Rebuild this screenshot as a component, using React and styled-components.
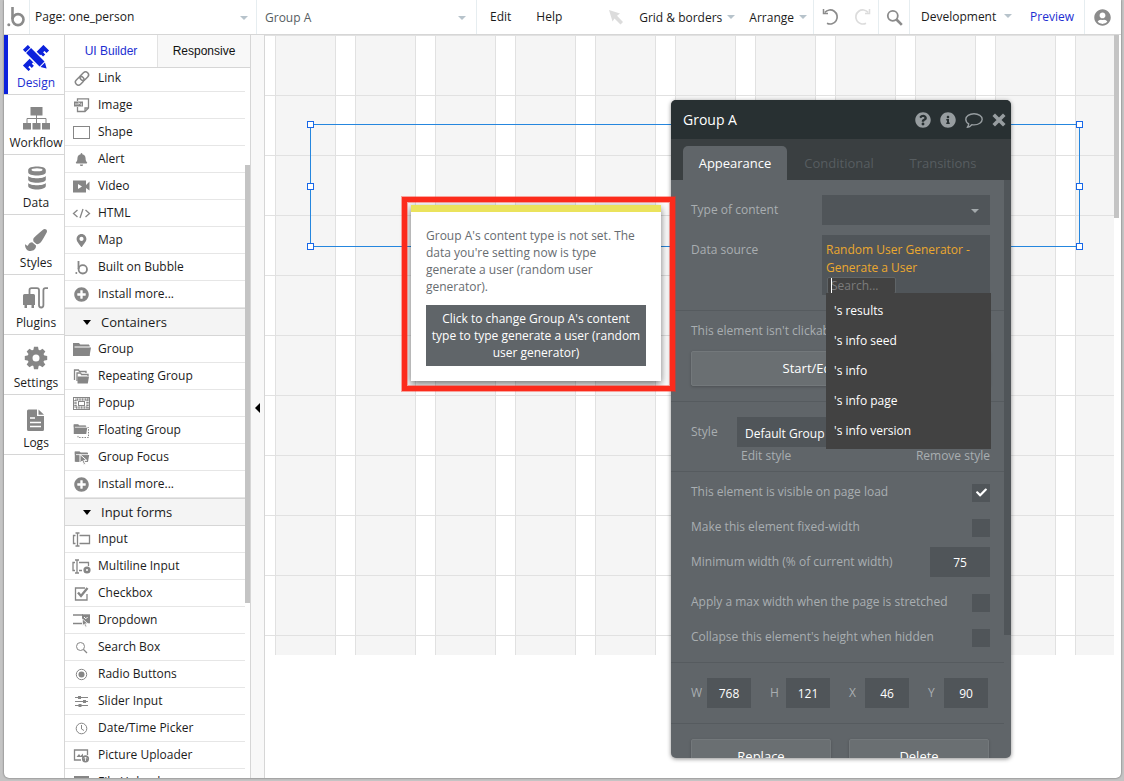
import React from 'react';
import styled, { createGlobalStyle, css } from 'styled-components';
import {
  FaCheck,
  FaInfoCircle,
  FaPaintBrush,
  FaPlusCircle,
  FaQuestionCircle,
  FaUserCircle,
  FaBell,
  FaMapMarkerAlt,
} from 'react-icons/fa';

const GlobalStyle = createGlobalStyle`
  * {
    box-sizing: border-box;
  }
  body {
    margin: 0;
    background: #c4c4c4;
    font-family: 'Open Sans', 'Noto Sans', sans-serif;
    font-size: 12px;
    color: #1b1b1b;
  }
  button,
  input,
  select {
    font: inherit;
    color: inherit;
    margin: 0;
    border: none;
    border-radius: 0;
    background: none;
    outline: none;
  }
  button {
    padding: 0;
    cursor: pointer;
  }
  a {
    color: inherit;
    text-decoration: none;
  }
`;

const Screen = styled.div`
  height: 100vh;
  padding: 0 3px 3px 4px;
`;

const Window = styled.div`
  display: flex;
  flex-direction: column;
  height: 100%;
  background: #fff;
  border-radius: 0 0 5px 5px;
  box-shadow: 0 0 2px rgba(0, 0, 0, 0.6);
  overflow: hidden;
`;

/* ---------- top bar ---------- */

const TopBar = styled.header`
  display: flex;
  flex: none;
  height: 35px;
  border-bottom: 1px solid #d6d6d6;
`;

const Cell = styled.div`
  display: flex;
  flex: none;
  align-items: center;
  justify-content: center;
  width: ${(p) => p.$width}px;
  border-right: 1px solid ${(p) => (p.$last ? 'transparent' : '#e6edf0')};
`;

const Picker = styled.label`
  position: relative;
  display: flex;
  flex: 0 1 ${(p) => p.$width}px;
  border-right: 1px solid #e6edf0;

  select {
    flex: 1;
    min-width: 0;
    padding: 0 20px ${(p) => p.$lift || 0}px ${(p) => p.$indent}px;
    appearance: none;
    color: ${(p) => p.$color};
  }
`;

const caret = css`
  content: '';
  border: 5px solid transparent;
  border-top-color: #b7c3cb;
  border-bottom: none;
`;

const PickerCaret = styled.span`
  position: absolute;
  right: ${(p) => p.$right || 8}px;
  top: 16px;
  pointer-events: none;

  &::after {
    display: block;
    ${caret}
    border-width: 4px;
    border-bottom: none;
  }
`;

const Menus = styled.nav`
  display: flex;
  flex: 1;
  align-items: center;
  padding: 0 0 2px 13px;
  gap: 25px;
`;

const Tools = styled.div`
  display: flex;
  align-items: center;
  gap: 14px;
  padding-right: 6px;
  border-right: 1px solid #e6edf0;
`;

const MenuButton = styled.button`
  display: flex;
  align-items: center;
  gap: ${(p) => p.$gap || 5}px;
  white-space: nowrap;

  &::after {
    ${(p) => p.$caret && caret}
    border-width: 4px;
    border-bottom: none;
  }
`;

const History = styled.div`
  display: flex;
  align-items: center;
  justify-content: space-between;
  width: 65px;
  padding: 0 7px 0 8px;
  border-right: 1px solid #e6edf0;
`;

const Deploy = styled.div`
  display: flex;
  align-items: center;
  justify-content: space-between;
  width: 175px;
  padding: 0 10px 2px 11px;
  border-right: 1px solid #e6edf0;
`;

const PreviewLink = styled.a`
  color: #1d2fd2;
`;

const IconButton = styled.button`
  display: flex;
  color: ${(p) => p.$color || '#8b8b8b'};
`;

/* ---------- left navigation ---------- */

const Workspace = styled.div`
  display: flex;
  flex: 1;
  min-height: 0;
`;

const Rail = styled.nav`
  flex: none;
  width: 61px;
  border-right: 1px solid #d6d6d6;
`;

const RailItem = styled.a`
  display: flex;
  flex-direction: column;
  align-items: center;
  gap: 3px;
  height: 60px;
  padding: 10px 0 0 4px;
  border-bottom: 1px solid #d6d6d6;
  box-shadow: ${(p) => (p.$active ? 'inset 4px 0 0 #0c22dc' : 'none')};
  color: ${(p) => (p.$active ? '#1d2fd2' : '#1b1b1b')};
  line-height: 18px;

  svg {
    flex: none;
    color: ${(p) => (p.$active ? '#0c22dc' : '#868686')};
  }
`;

/* ---------- element palette ---------- */

const Palette = styled.aside`
  display: flex;
  flex: none;
  flex-direction: column;
  width: 186px;
  border-right: 1px solid #d6d6d6;
`;

const PaletteTabs = styled.div`
  display: flex;
  flex: none;
  height: 33px;
  border-bottom: 1px solid #d6d6d6;
`;

const PaletteTab = styled.button`
  flex: 1;
  font-family: 'Liberation Sans', sans-serif;
  color: ${(p) => (p.$active ? '#1d2fd2' : '#111')};
  background: ${(p) => (p.$active ? '#fff' : '#f8f8f8')};

  & + & {
    border-left: 1px solid #e2e2e2;
  }
`;

const PaletteBody = styled.div`
  display: flex;
  flex: 1;
  min-height: 0;
  overflow: hidden;
`;

const PaletteList = styled.div`
  flex: 1;
  margin-top: -3px;
`;

const PaletteItem = styled.button`
  display: flex;
  align-items: center;
  gap: 6px;
  width: 100%;
  height: 27px;
  padding-left: 7px;
  border-bottom: 1px solid #e6e6e6;
  text-align: left;

  svg {
    flex: none;
    color: #868686;
  }

  span {
    padding-bottom: 2px;
  }
`;

const SectionHead = styled.button`
  display: flex;
  align-items: center;
  gap: 10px;
  width: 100%;
  height: 28px;
  padding-left: 18px;
  border: solid #d6d6d6;
  border-width: 1px 0;
  background: #f4f4f4;
  font-size: 13px;

  &::before {
    content: '';
    border: 4px solid transparent;
    border-top: 5px solid #000;
    border-bottom: none;
  }
`;

const PaletteTrack = styled.div`
  flex: none;
  width: 5px;
  padding-top: 97px;
`;

const Thumb = styled.div`
  width: ${(p) => p.$width}px;
  height: ${(p) => p.$height}px;
  background: ${(p) => p.$color || '#c4c4c4'};
`;

const Gutter = styled.div`
  display: flex;
  flex: none;
  align-items: center;
  justify-content: center;
  width: 14px;
  padding-top: 3px;
  border-right: 1px solid #d6d6d6;
  background: #f8f8f8;
`;

const Collapse = styled.button`
  border: 5px solid transparent;
  border-right: 5px solid #000;
  border-left: none;
`;

/* ---------- canvas ---------- */

const Canvas = styled.main`
  position: relative;
  display: flex;
  flex: 1;
  min-width: 0;
`;

const Grid = styled.div`
  flex: 1;
  height: 620px;
  background:
    linear-gradient(#e1e1e1 1px, transparent 1px) 0 0 / 100% 60px,
    linear-gradient(90deg, #e1e1e1 1px, #f5f5f5 1px 60px, #e1e1e1 60px 61px, #fff 61px) 10px 0 /
      80px 100%;
`;

const CanvasTrack = styled.div`
  flex: none;
  width: 7px;
`;

const Selection = styled.div`
  position: absolute;
  top: 89px;
  left: 45px;
  width: 770px;
  height: 123px;
  border: 1px solid #2586de;
`;

const Handle = styled.span`
  position: absolute;
  top: ${(p) => p.$y}px;
  ${(p) => p.$side}: -4px;
  width: 7px;
  height: 7px;
  border: 1px solid #1767e8;
  background: #fff;
`;

const Callout = styled.section`
  position: absolute;
  top: 170px;
  left: 146px;
  width: 250px;
  padding: 15px;
  border-top: 7px solid #ebe35c;
  background: #fff;
  box-shadow: 0 3px 8px rgba(0, 0, 0, 0.55);
  color: #676c70;
  line-height: 17px;

  p {
    margin: 0 0 10px;
  }

  button {
    width: 100%;
    padding: 5px;
    background: #606569;
    color: #fff;
  }
`;

const Highlight = styled.div`
  position: absolute;
  top: 162px;
  left: 137px;
  width: 273px;
  height: 194px;
  border: 5px solid #fc2b1c;
  box-shadow:
    0 0 0 1px rgba(252, 43, 28, 0.4),
    inset 0 0 0 1px rgba(252, 43, 28, 0.4);
  pointer-events: none;
`;

/* ---------- property editor ---------- */

const Editor = styled.section`
  position: absolute;
  top: 65px;
  bottom: 20px;
  left: 406px;
  display: flex;
  flex-direction: column;
  width: 340px;
  border-radius: 5px;
  background: #606569;
  box-shadow: 0 1px 4px rgba(0, 0, 0, 0.45);
  color: #a9aeb1;
  overflow: hidden;
`;

const EditorHead = styled.header`
  display: flex;
  flex: none;
  align-items: center;
  gap: 9px;
  height: 39px;
  padding: 1px 5px 0 12px;
  background: #283032;

  h2 {
    flex: 1;
    margin: 0;
    padding-bottom: 1px;
    font-size: 14px;
    font-weight: 400;
    color: #fff;
  }
`;

const EditorTabs = styled.div`
  display: flex;
  flex: none;
  align-items: flex-end;
  height: 41px;
  padding-left: 12px;
  background: #3a3f41;
`;

const EditorTab = styled.button`
  width: 104px;
  height: 34px;
  border-radius: 5px 5px 0 0;
  font-size: 13px;
  background: ${(p) => (p.$active ? '#606569' : 'none')};
  color: ${(p) => (p.$active ? '#fff' : '#575d60')};
`;

const EditorBody = styled.div`
  display: flex;
  flex: 1;
  min-height: 0;
  overflow: hidden;
`;

const Fields = styled.form`
  flex: 1;
`;

const Section = styled.div`
  display: flex;
  flex-direction: column;
  gap: ${(p) => p.$gap || 0}px;
  padding: ${(p) => p.$top || 15}px 14px ${(p) => p.$bottom || 15}px 20px;
  border-bottom: 1px solid #565b5f;
`;

const Field = styled.div`
  display: flex;
  justify-content: space-between;
  line-height: 30px;
`;

const Dropdown = styled.span`
  position: relative;
  display: flex;
  width: ${(p) => p.$width}px;
  height: 30px;

  select {
    flex: 1;
    padding: 2px 8px 0;
    appearance: none;
    background: #505559;
    color: #fff;
  }
`;

const DropdownCaret = styled(PickerCaret)`
  right: 11px;
  top: 14px;
  line-height: 0;

  &::after {
    border-top-color: #a3a9ac;
  }
`;

const Expression = styled.div`
  position: relative;
  width: 168px;
  height: 60px;
  padding: 6px 4px 0;
  background: #505559;
  line-height: 18px;
  color: #eba82f;
`;

const Search = styled.input`
  position: absolute;
  top: 42px;
  left: 5px;
  width: 69px;
  height: 17px;
  padding: 0 3px;
  border: 1px solid #5f6467;
  border-radius: 2px;
  background: #424242;
  color: #fff;

  &::placeholder {
    color: #7c7c7c;
    opacity: 1;
  }
`;

const Cursor = styled.span`
  position: absolute;
  top: 43px;
  left: 9px;
  width: 1px;
  height: 15px;
  background: #fff;
`;

const Options = styled.ul`
  position: absolute;
  z-index: 2;
  top: 58px;
  left: 4px;
  width: 165px;
  margin: 0;
  padding: 3px 0;
  list-style: none;
  background: #424242;

  button {
    display: block;
    width: 100%;
    height: 30px;
    padding-left: 8px;
    color: #fff;
    text-align: left;
  }
`;

const Note = styled.div`
  line-height: 18px;
`;

const RaisedButton = styled.button`
  height: 35px;
  padding-bottom: 2px;
  border: 1px solid #73787b;
  border-radius: 2px;
  background: #6a6f72;
  box-shadow: 0 1px 3px rgba(0, 0, 0, 0.2);
  font-size: 13px;
  color: #fff;
`;

const StyleRow = styled.div`
  display: flex;
  justify-content: space-between;
  line-height: 30px;
`;

const StyleLinks = styled.div`
  display: flex;
  justify-content: space-between;
  padding-left: 50px;
  line-height: 18px;
`;

const CheckRow = styled.label`
  display: flex;
  justify-content: space-between;
  height: 18px;
  line-height: 16px;
  white-space: nowrap;
`;

const CheckBox = styled.span`
  position: relative;
  display: flex;
  width: 18px;
  height: 18px;

  input {
    flex: 1;
    appearance: none;
    background: #505559;
  }

  svg {
    position: absolute;
    top: 3px;
    left: 4px;
    color: #fff;
    visibility: hidden;
  }

  input:checked + svg {
    visibility: visible;
  }
`;

const WidthRow = styled.label`
  display: flex;
  justify-content: space-between;
  margin-top: -7px;
  line-height: 29px;
`;

const NumberInput = styled.input`
  width: ${(p) => p.$width}px;
  height: 30px;
  padding: 1px 0 0;
  background: #505559;
  color: #fff;
  text-align: center;
`;

const Geometry = styled.div`
  display: flex;
  gap: 19px;

  label {
    display: flex;
    line-height: 29px;
  }

  label > span {
    width: 16px;
  }
`;

const Actions = styled.div`
  display: grid;
  grid-template-columns: 140px 140px;
  gap: 18px;
`;

/* ---------- drawings ---------- */

const Svg = ({ w, h, children }) => (
  <svg width={w} height={h} viewBox={`0 0 ${w} ${h}`} fill="none" aria-hidden="true">
    {children}
  </svg>
);

const stroke = { stroke: 'currentColor', strokeWidth: 1.3 };
const fill = { fill: 'currentColor' };

const Logo = () => (
  <Svg w={20} h={22}>
    <circle cx="1.8" cy="18.8" r="1.5" fill="#8b8b8b" />
    <path d="M5.500 1v12" stroke="#8b8b8b" strokeWidth="2.600" />
    <circle cx="11" cy="13.600" r="5.500" stroke="#8b8b8b" strokeWidth="2.600" />
  </Svg>
);

const railIcons = {
  Design: (
    <Svg w={28} h={26}>
      <g transform="rotate(-45 14 13)">
        <path
          d="M-.5 9h29v8h-3.500v-3h-2v3h-3v-3h-2v3H9v-3H7v3H4v-3H2v3H-.5z"
          {...fill}
        />
      </g>
      <g transform="rotate(45 14 13)">
        <path d="M-1 8h28v10H-1z" fill="#fff" transform="translate(4 0) scale(.7 1)" />
        <path d="M-1 9.500h3.500v7H-1zM3.500 9.500h19v7h-19zM23.500 9.800 29 13l-5.500 3.200z" {...fill} />
      </g>
    </Svg>
  ),
  Workflow: (
    <Svg w={28} h={26}>
      <path d="M8.500 2h12v8.500h-12zM1 18h8v6.500H1zM10.500 18h8v6.500h-8zM20 18h8v6.500h-8z" {...fill} />
      <path d="M14.500 10v8M5 18v-4.500h19V18" stroke="currentColor" strokeWidth="1" />
    </Svg>
  ),
  Data: (
    <Svg w={28} h={26}>
      <path d="M6.200 5c0-4.600 17.600-4.600 17.600 0v2.200c0 4.400-17.600 4.400-17.600 0z" {...fill} />
      <ellipse cx="15" cy="4.800" rx="5.500" ry="1.500" fill="#fff" />
      <path d="M6.200 11c2 3 15.600 3 17.600 0v3.500c0 4.400-17.600 4.400-17.600 0z" {...fill} />
      <path d="M6.200 18c2 3 15.600 3 17.600 0v3c0 4.600-17.600 4.600-17.600 0z" {...fill} />
    </Svg>
  ),
  Styles: (
    <Svg w={28} h={26}>
      <g transform="translate(3 4)">
        <FaPaintBrush size={22} />
      </g>
    </Svg>
  ),
  Plugins: (
    <Svg w={28} h={26}>
      <path d="M1 10.500Q1 9 2.500 9h9Q13 9 13 10.500V20H1zM2.500 19.500H5V23H2.500zM9.500 19.500H12V23H9.500z" {...fill} />
      <path
        d="M7.500 9V5Q7.500 3.200 9.500 3.200h5.500q2 0 2 2V20q0 2.500 2.200 2.500t2.200-2.500V5.200q0-2 2-2H26"
        stroke="currentColor"
        strokeWidth="1.800"
      />
    </Svg>
  ),
  Settings: (
    <Svg w={28} h={26}>
      <circle cx="14" cy="13" r="6" stroke="currentColor" strokeWidth="5" />
      {[0, 45, 90, 135, 180, 225, 270, 315].map((a) => (
        <path key={a} d="M11.300 5.500 12 1.800h4l.7 3.700z" transform={`rotate(${a} 14 13)`} {...fill} />
      ))}
    </Svg>
  ),
  Logs: (
    <Svg w={28} h={26}>
      <path d="M5 6q0-1.500 1.500-1.500H15V11h7v13.500q0 1.500-1.500 1.500h-14Q5 26 5 24.500z" {...fill} />
      <path d="M16.500 4.500 22 9.800h-5.500z" {...fill} />
      <path d="M8 13h5M8 17.500h11M8 21.500h11" stroke="#fff" strokeWidth="1.300" />
    </Svg>
  ),
};

const folder = 'M1 3h6l1 1.500h9V7H1zM3 7.500h16L17.500 16H2z';

const Folder = ({ children, transform }) => (
  <Svg w={20} h={18}>
    <g transform={transform}>
      <path d="M1 3.500h6l1.500 1.500h9V16H1z" {...fill} />
      <path d={folder} {...fill} />
      <path d="M2.500 7h15" stroke="#fff" strokeWidth="1" />
    </g>
    {children}
  </Svg>
);

const pointer = 'M0 0v8.500l2.200-2 1.600 3.700 1.700-.8-1.700-3.500h3z';

const paletteIcons = {
  link: (
    <Svg w={20} h={18}>
      <g transform="rotate(-45 10 9.500)" stroke="currentColor" strokeWidth="1.500">
        <rect x="2" y="6.500" width="9.500" height="6" rx="3" />
        <rect x="8.500" y="6.500" width="9.500" height="6" rx="3" />
      </g>
    </Svg>
  ),
  image: (
    <Svg w={20} h={18}>
      <path d="M5.500 5V2.800h11V12L13 15.500H5.500V11M16.500 12H13v3.500" {...stroke} />
      <rect x="2" y="5.500" width="9" height="5" {...fill} />
      <path d="M4 7v2M6 9V7h1.500v1M9.500 7.500H9V9h1" stroke="#fff" strokeWidth=".7" />
    </Svg>
  ),
  shape: (
    <Svg w={20} h={18}>
      <rect x="1.500" y="3.500" width="16" height="12" stroke="currentColor" />
    </Svg>
  ),
  bell: (
    <Svg w={20} h={18}>
      <g transform="translate(3 3)">
        <FaBell size={13} />
      </g>
    </Svg>
  ),
  video: (
    <Svg w={20} h={18}>
      <path d="M1 3.500h13v12H1zM14 8l3.500-3.500v9L14 11z" {...fill} />
      <path d="M6 7v5l4-2.500z" fill="#fff" />
    </Svg>
  ),
  code: (
    <Svg w={20} h={18}>
      <path d="m5.500 6-4 3.500 4 3.500M13.500 6l4 3.500-4 3.500M11 5 8 14" {...stroke} />
    </Svg>
  ),
  pin: (
    <Svg w={20} h={18}>
      <g transform="translate(3 3)">
        <FaMapMarkerAlt size={13} />
      </g>
    </Svg>
  ),
  bubble: (
    <Svg w={20} h={18}>
      <circle cx="4.300" cy="15" r="1" {...fill} />
      <path d="M6.500 3v8" stroke="currentColor" strokeWidth="1.800" />
      <circle cx="10.800" cy="11.300" r="4.200" stroke="currentColor" strokeWidth="1.800" />
    </Svg>
  ),
  plus: (
    <Svg w={20} h={18}>
      <g transform="translate(2 2)">
        <FaPlusCircle size={15} />
      </g>
    </Svg>
  ),
  folder: <Folder />,
  folders: (
    <Svg w={20} h={18}>
      <path d="M2.500 13V3h4l1 1.500H14V6" {...stroke} />
      <path d="M5 14V6h3.500l1 1.500H16V9" {...stroke} />
      <path d="M5.500 9.500H17L15.800 16.500H5.500z" {...fill} />
    </Svg>
  ),
  popup: (
    <Svg w={20} h={18}>
      <rect x="1.500" y="3.500" width="16" height="12" stroke="currentColor" />
      <rect x="3.500" y="5.500" width="12" height="8" stroke="currentColor" strokeWidth="2.500" strokeDasharray="1 .6" />
      <rect x="5" y="7" width="9" height="5" fill="#fff" />
      <rect x="6.500" y="7.500" width="6" height="4" stroke="currentColor" />
    </Svg>
  ),
  floating: (
    <Folder transform="translate(1 1) scale(.75)">
      <path d="M15.500 6.500h1v10H6V14" stroke="currentColor" strokeDasharray="1.500 1.200" />
    </Folder>
  ),
  focus: (
    <Folder transform="translate(2 1) scale(.8)">
      <path d={pointer} transform="translate(8 6.500)" stroke="#fff" strokeWidth="1" {...fill} />
    </Folder>
  ),
  input: (
    <Svg w={20} h={18}>
      <path d="M3.500 5.500h-2v8h2M7.500 5.500h10v8h-10M3.500 3h4M3.500 16h4M5.500 3v13" {...stroke} />
    </Svg>
  ),
  multiline: (
    <Svg w={20} h={18}>
      <path d="M3 5.500H1v8h2M7 5.500h9.500V9M7 13.500h3M3 3h4M3 16h4M5 3v13" {...stroke} />
      <circle cx="15" cy="13" r="2.300" stroke="currentColor" strokeWidth="2.600" />
    </Svg>
  ),
  check: (
    <Svg w={20} h={18}>
      <path d="M13 4H3.500v12H15v-6" {...stroke} />
      <path d="m6 8.500 3 3.500 6.500-8" stroke="currentColor" strokeWidth="2.400" />
    </Svg>
  ),
  dropdown: (
    <Svg w={20} h={18}>
      <path d="M1 4h10M1 12.500h9" stroke="currentColor" strokeWidth="1.500" />
      <path d="M10 3.300h8v9h-8z" {...fill} />
      <path d="m12 6 1.800 1.800L15.600 6" stroke="#fff" />
      <path d={pointer} transform="translate(10.500 8) scale(.8)" stroke="#fff" {...fill} />
    </Svg>
  ),
  search: (
    <Svg w={20} h={18}>
      <circle cx="8.500" cy="8.500" r="4" stroke="currentColor" />
      <path d="m11.500 11.500 3.500 3.500" {...stroke} />
    </Svg>
  ),
  radio: (
    <Svg w={20} h={18}>
      <circle cx="9.500" cy="9.500" r="5.200" stroke="currentColor" />
      <circle cx="9.500" cy="9.500" r="3" {...fill} />
    </Svg>
  ),
  slider: (
    <Svg w={20} h={18}>
      <path d="M3 5.500h13M3 9.500h13M3 13.500h13" stroke="currentColor" />
      <path d="M6 4h3v3H6zM11 8h3v3h-3zM6.500 12h3v3h-3z" {...fill} />
    </Svg>
  ),
  clock: (
    <Svg w={20} h={18}>
      <circle cx="9.500" cy="9.500" r="5.300" stroke="currentColor" />
      <path d="M9.500 6v4l2.500 1.500" stroke="currentColor" />
    </Svg>
  ),
  picture: (
    <Svg w={20} h={18}>
      <path d="M9 14H2.500V4h13v5" {...stroke} />
      <path d="m4.500 11 2.500-3 1.500 2 2.500-2.500V11z" {...fill} />
      <circle cx="13.500" cy="12.800" r="3.600" {...fill} />
      <path d="M13.500 15v-4m-1.500 1.500 1.500-1.500 1.500 1.500" stroke="#fff" strokeWidth=".8" />
    </Svg>
  ),
  file: (
    <Svg w={20} h={18}>
      <path d="M2 3h15v12H2z" {...fill} />
      <path d="M4 6h11" stroke="#fff" />
    </Svg>
  ),
};

const PointerIcon = () => (
  <Svg w={16} h={15}>
    <path d="M0 0l11 3.500-3 2.300 6 6.200-2.500 2.500-6-6L3.500 11.500z" fill="#dcdcdc" />
  </Svg>
);

const UndoIcon = ({ flip }) => (
  <Svg w={17} h={18}>
    <g transform={flip ? 'translate(17 0) scale(-1 1)' : undefined}>
      <path d="M2.800 4.500A7 7 0 1 1 5 15.200" stroke="currentColor" strokeWidth="1.700" />
      <path d="M1.500 1v4.500H6" stroke="currentColor" strokeWidth="1.500" />
    </g>
  </Svg>
);

const SearchIcon = () => (
  <Svg w={17} h={17}>
    <circle cx="6.800" cy="6.800" r="5" stroke="currentColor" strokeWidth="1.800" />
    <path d="m10.500 10.500 5.300 5.300" stroke="currentColor" strokeWidth="2.600" />
  </Svg>
);

const CommentIcon = () => (
  <Svg w={18} h={17}>
    <path
      d="M9 1.700c4.600 0 8.200 2.500 8.200 5.600S13.600 12.900 9 12.900c-.8 0-1.500-.1-2.200-.2-1.200 1.400-2.800 2.400-4.600 2.700.9-1 1.400-2.200 1.500-3.500C1.900 10.900.8 9.200.8 7.300c0-3.100 3.600-5.600 8.200-5.600z"
      stroke="currentColor"
      strokeWidth="1.400"
      strokeLinejoin="round"
    />
  </Svg>
);

const CloseIcon = () => (
  <Svg w={14} h={14}>
    <path
      d="m3 3 8 8M11 3l-8 8"
      stroke="currentColor"
      strokeWidth="3.600"
      strokeLinecap="square"
    />
  </Svg>
);

/* ---------- data ---------- */

const railItems = ['Design', 'Workflow', 'Data', 'Styles', 'Plugins', 'Settings', 'Logs'];

const palette = [
  {
    items: [
      ['link', 'Link'],
      ['image', 'Image'],
      ['shape', 'Shape'],
      ['bell', 'Alert'],
      ['video', 'Video'],
      ['code', 'HTML'],
      ['pin', 'Map'],
      ['bubble', 'Built on Bubble'],
      ['plus', 'Install more...'],
    ],
  },
  {
    title: 'Containers',
    items: [
      ['folder', 'Group'],
      ['folders', 'Repeating Group'],
      ['popup', 'Popup'],
      ['floating', 'Floating Group'],
      ['focus', 'Group Focus'],
      ['plus', 'Install more...'],
    ],
  },
  {
    title: 'Input forms',
    items: [
      ['input', 'Input'],
      ['multiline', 'Multiline Input'],
      ['check', 'Checkbox'],
      ['dropdown', 'Dropdown'],
      ['search', 'Search Box'],
      ['radio', 'Radio Buttons'],
      ['slider', 'Slider Input'],
      ['clock', 'Date/Time Picker'],
      ['picture', 'Picture Uploader'],
      ['file', 'File Uploader'],
    ],
  },
];

const options = ["'s results", "'s info seed", "'s info", "'s info page", "'s info version"];

const geometry = [
  ['W', 768],
  ['H', 121],
  ['X', 46],
  ['Y', 90],
];

const Check = ({ label, checked }) => (
  <CheckRow>
    {label}
    <CheckBox>
      <input type="checkbox" defaultChecked={checked} />
      <FaCheck size={11} />
    </CheckBox>
  </CheckRow>
);

const Header = () => (
  <TopBar>
    <Cell $width={26}>
      <Logo />
    </Cell>
    <Picker $width={227} $indent={5} $lift={2} $color="#1b1b1b">
      <select aria-label="Page">
        <option>Page: one_person</option>
      </select>
      <PickerCaret />
    </Picker>
    <Picker $width={220} $indent={8} $color="#565e62">
      <select aria-label="Element">
        <option>Group A</option>
      </select>
      <PickerCaret $right={10} />
    </Picker>
    <Menus>
      <MenuButton>Edit</MenuButton>
      <MenuButton>Help</MenuButton>
    </Menus>
    <Tools>
      <PointerIcon />
      <MenuButton $caret>Grid &amp; borders</MenuButton>
      <MenuButton $caret>Arrange</MenuButton>
    </Tools>
    <History>
      <IconButton aria-label="Undo">
        <UndoIcon />
      </IconButton>
      <IconButton aria-label="Redo" $color="#dcdcdc">
        <UndoIcon flip />
      </IconButton>
    </History>
    <Cell $width={31}>
      <IconButton aria-label="Search">
        <SearchIcon />
      </IconButton>
    </Cell>
    <Deploy>
      <MenuButton $caret $gap={8}>Development</MenuButton>
      <PreviewLink href="#preview">Preview</PreviewLink>
    </Deploy>
    <Cell $width={36} $last>
      <IconButton aria-label="Account">
        <FaUserCircle size={17} />
      </IconButton>
    </Cell>
  </TopBar>
);

const PropertyEditor = () => (
  <Editor>
    <EditorHead>
      <h2>Group A</h2>
      <IconButton aria-label="Help" $color="#979da0">
        <FaQuestionCircle size={16} />
      </IconButton>
      <IconButton aria-label="Info" $color="#979da0">
        <FaInfoCircle size={16} />
      </IconButton>
      <IconButton aria-label="Comment" $color="#979da0">
        <CommentIcon />
      </IconButton>
      <IconButton aria-label="Close" $color="#979da0">
        <CloseIcon />
      </IconButton>
    </EditorHead>
    <EditorTabs>
      <EditorTab $active>Appearance</EditorTab>
      <EditorTab>Conditional</EditorTab>
      <EditorTab>Transitions</EditorTab>
    </EditorTabs>
    <EditorBody>
      <Fields>
        <Section $gap={10}>
          <Field>
            <label htmlFor="content-type">Type of content</label>
            <Dropdown $width={168}>
              <select id="content-type">
                <option> </option>
              </select>
              <DropdownCaret />
            </Dropdown>
          </Field>
          <Field>
            <label htmlFor="data-source">Data source</label>
            <Expression>
              Random User Generator - Generate a User
              <Search id="data-source" placeholder="Search..." />
              <Cursor />
              <Options>
                {options.map((option) => (
                  <li key={option}>
                    <button type="button">{option}</button>
                  </li>
                ))}
              </Options>
            </Expression>
          </Field>
        </Section>
        <Section $top={11} $gap={11}>
          <Note>This element isn't clickable</Note>
          <RaisedButton type="button">Start/Edit workflow</RaisedButton>
        </Section>
        <Section $bottom={6}>
          <StyleRow>
            <label htmlFor="style">Style</label>
            <Dropdown $width={253}>
              <select id="style">
                <option>Default Group</option>
              </select>
            </Dropdown>
          </StyleRow>
          <StyleLinks>
            <a href="#edit-style">Edit style</a>
            <a href="#remove-style">Remove style</a>
          </StyleLinks>
        </Section>
        <Section $top={12} $gap={17}>
          <Check label="This element is visible on page load" checked />
          <Check label="Make this element fixed-width" />
          <WidthRow>
            Minimum width (% of current width)
            <NumberInput $width={60} defaultValue="75" />
          </WidthRow>
          <Check label="Apply a max width when the page is stretched" />
          <Check label="Collapse this element's height when hidden" />
        </Section>
        <Section>
          <Geometry>
            {geometry.map(([name, value]) => (
              <label key={name}>
                <span>{name}</span>
                <NumberInput $width={44} defaultValue={value} />
              </label>
            ))}
          </Geometry>
        </Section>
        <Section>
          <Actions>
            <RaisedButton type="button">Replace</RaisedButton>
            <RaisedButton type="button">Delete</RaisedButton>
          </Actions>
        </Section>
      </Fields>
      <Thumb $width={7} $height={455} $color="#505559" />
    </EditorBody>
  </Editor>
);

const App = () => (
  <Screen>
    <GlobalStyle />
    <Window>
      <Header />
      <Workspace>
        <Rail>
          {railItems.map((name) => (
            <RailItem key={name} href={`#${name.toLowerCase()}`} $active={name === 'Design'}>
              {railIcons[name]}
              {name}
            </RailItem>
          ))}
        </Rail>
        <Palette>
          <PaletteTabs>
            <PaletteTab $active>UI Builder</PaletteTab>
            <PaletteTab>Responsive</PaletteTab>
          </PaletteTabs>
          <PaletteBody>
            <PaletteList>
              {palette.map((section, index) => (
                <React.Fragment key={index}>
                  {section.title && <SectionHead>{section.title}</SectionHead>}
                  {section.items.map(([icon, name]) => (
                    <PaletteItem key={name}>
                      {paletteIcons[icon]}
                      <span>{name}</span>
                    </PaletteItem>
                  ))}
                </React.Fragment>
              ))}
            </PaletteList>
            <PaletteTrack>
              <Thumb $width={5} $height={438} />
            </PaletteTrack>
          </PaletteBody>
        </Palette>
        <Gutter>
          <Collapse aria-label="Collapse palette" />
        </Gutter>
        <Canvas>
          <Grid />
          <CanvasTrack>
            <Thumb $width={5} $height={183} />
          </CanvasTrack>
          <Selection>
            {[-4, 58, 118].map((y) => (
              <React.Fragment key={y}>
                <Handle $y={y} $side="left" />
                <Handle $y={y} $side="right" />
              </React.Fragment>
            ))}
          </Selection>
          <Callout>
            <p>
              Group A's content type is not set. The data you're setting now is type generate a
              user (random user generator).
            </p>
            <button>
              Click to change Group A's content type to type generate a user (random user
              generator)
            </button>
          </Callout>
          <PropertyEditor />
          <Highlight />
        </Canvas>
      </Workspace>
    </Window>
  </Screen>
);

export default App;
